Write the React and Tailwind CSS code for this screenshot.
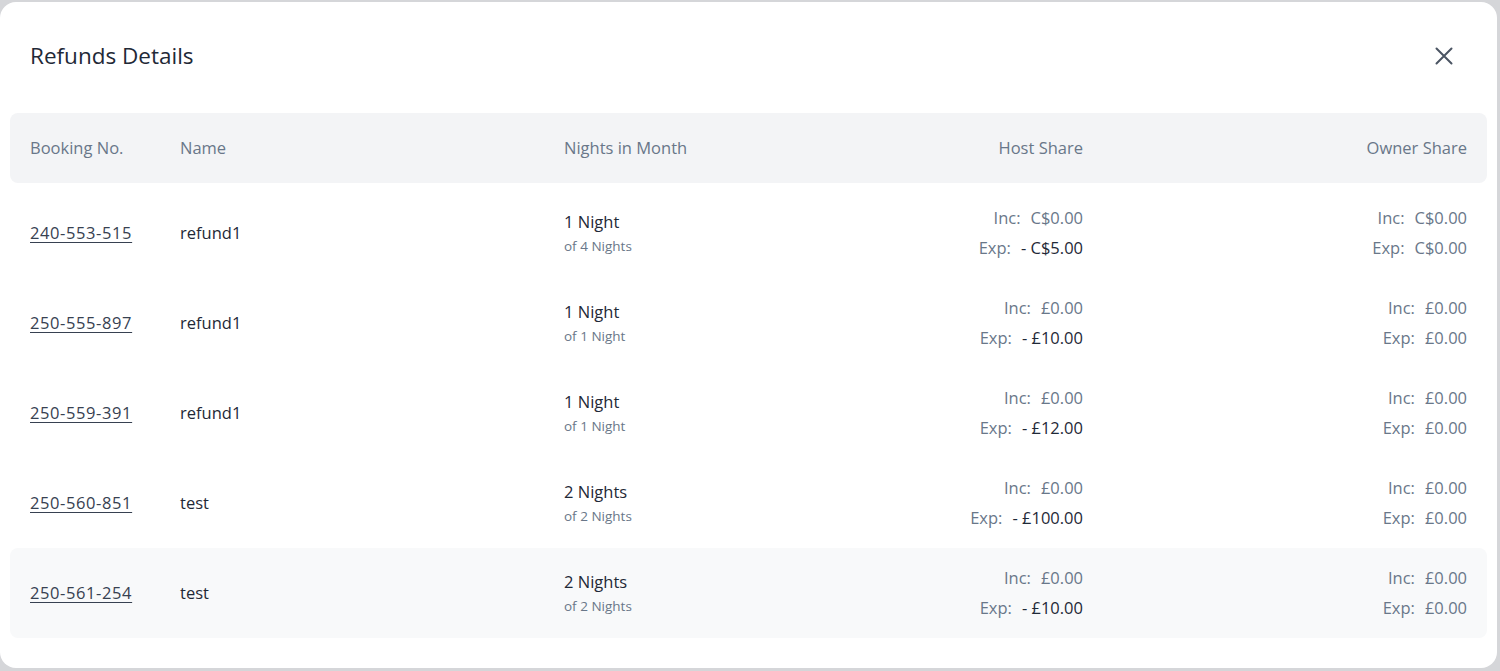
import React from "react";

const rows = [
  { no: "240-553-515", name: "refund1", nights: "1 Night", of: "of 4 Nights", hostInc: "C$0.00", hostExp: "- C$5.00", ownInc: "C$0.00", ownExp: "C$0.00" },
  { no: "250-555-897", name: "refund1", nights: "1 Night", of: "of 1 Night", hostInc: "£0.00", hostExp: "- £10.00", ownInc: "£0.00", ownExp: "£0.00" },
  { no: "250-559-391", name: "refund1", nights: "1 Night", of: "of 1 Night", hostInc: "£0.00", hostExp: "- £12.00", ownInc: "£0.00", ownExp: "£0.00" },
  { no: "250-560-851", name: "test", nights: "2 Nights", of: "of 2 Nights", hostInc: "£0.00", hostExp: "- £100.00", ownInc: "£0.00", ownExp: "£0.00" },
  { no: "250-561-254", name: "test", nights: "2 Nights", of: "of 2 Nights", hostInc: "£0.00", hostExp: "- £10.00", ownInc: "£0.00", ownExp: "£0.00", shaded: true },
];

const cols = "grid grid-cols-[150px_384px_280px_279px_1fr]";

function Share({ inc, exp, expDark }) {
  return (
    <div className="flex flex-col items-end gap-[8px] pr-[20px] text-[16.5px] leading-[22px]">
      <div>
        <span className="text-[#697789]">Inc:</span>
        <span className="ml-[10px] text-[#697789]">{inc}</span>
      </div>
      <div>
        <span className="text-[#697789]">Exp:</span>
        <span className={`ml-[10px] ${expDark ? "text-[#1f2937]" : "text-[#697789]"}`}>{exp}</span>
      </div>
    </div>
  );
}

export default function App() {
  return (
    <div
      className="relative h-[671px] w-[1500px] overflow-hidden bg-[#d5d6d9]"
      style={{ fontFamily: "'Open Sans', 'Noto Sans', sans-serif" }}
    >
      {/* page behind the overlay */}
      <div className="flex items-end h-[8px] text-[15px] leading-[20px] text-[#374151] -mt-[12px]">
        <span className="ml-[130px]">Dashboard</span>
        <span className="ml-[45px] text-[#1e3a8a]">MTD</span>
        <span className="ml-[50px] text-[#6b7280]">January 2024</span>
        <span className="ml-auto mr-[38px] text-[#111827]">Switch to Owner View</span>
      </div>

      <div className="absolute left-0 right-[3px] top-[2px] bottom-[3px] rounded-[16px] bg-white">
        <div className="flex items-center justify-between h-[111px] pl-[30px] pr-[44px] pb-[4px]">
          <h2 className="text-[22.5px] text-[#1f2937]">Refunds Details</h2>
          <button className="text-[#4b5563]">
            <svg width="18" height="18" viewBox="0 0 18 18" fill="none" stroke="currentColor" strokeWidth="2" strokeLinecap="round">
              <path d="M1.5 1.5l15 15M16.5 1.5l-15 15" />
            </svg>
          </button>
        </div>

        <div className="px-[10px]">
          <div className={`${cols} items-center h-[70px] rounded-[8px] bg-[#f3f4f6] text-[16.5px] text-[#697789]`}>
            <div className="pl-[20px]">Booking No.</div>
            <div className="pl-[20px]">Name</div>
            <div className="pl-[20px]">Nights in Month</div>
            <div className="pr-[20px] text-right">Host Share</div>
            <div className="pr-[20px] text-right">Owner Share</div>
          </div>

          <div className="mt-[5px]">
            {rows.map((r) => (
              <div
                key={r.no}
                className={`${cols} items-center h-[90px] rounded-[8px] ${r.shaded ? "bg-[#f8f9fa]" : ""}`}
              >
                <div className="pl-[20px] text-[16.5px] tracking-[0.6px] text-[#374151] underline decoration-[1px] underline-offset-[3px]">
                  {r.no}
                </div>
                <div className="pl-[20px] text-[16.5px] text-[#1f2937]">{r.name}</div>
                <div className="pl-[20px] flex flex-col">
                  <span className="text-[16.5px] leading-[22px] text-[#1f2937]">{r.nights}</span>
                  <span className="mt-[3px] text-[13.5px] leading-[20px] text-[#697789]">{r.of}</span>
                </div>
                <Share inc={r.hostInc} exp={r.hostExp} expDark />
                <Share inc={r.ownInc} exp={r.ownExp} />
              </div>
            ))}
          </div>
        </div>
      </div>
    </div>
  );
}
